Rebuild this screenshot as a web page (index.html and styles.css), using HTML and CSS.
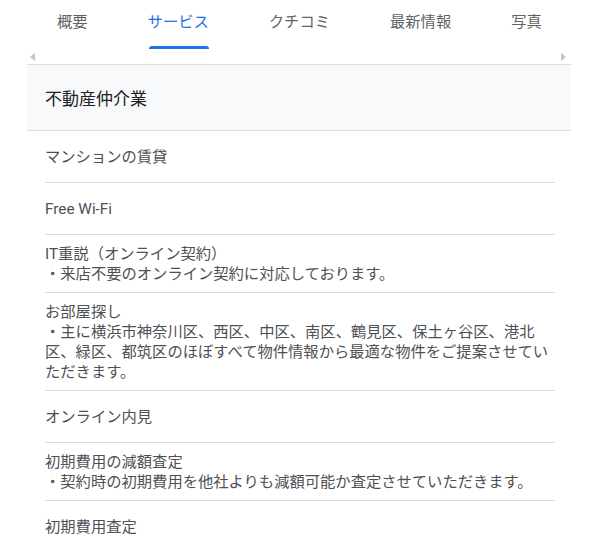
FILE: index.html
```html
<!DOCTYPE html>
<html lang="ja">
<head>
<meta charset="utf-8">
<title>サービス</title>
<link rel="stylesheet" href="styles.css">
</head>
<body>
<div class="panel">
  <nav class="tabs">
    <div class="tab">概要</div>
    <div class="tab active">サービス</div>
    <div class="tab">クチコミ</div>
    <div class="tab">最新情報</div>
    <div class="tab">写真</div>
  </nav>
  <div class="scroller">
    <span class="arrow left"></span>
    <span class="arrow right"></span>
  </div>
  <div class="category">不動産仲介業</div>
  <ul class="items">
    <li class="item">マンションの賃貸</li>
    <li class="item">Free Wi-Fi</li>
    <li class="item"><div>IT重説（オンライン契約）</div><div>・来店不要のオンライン契約に対応しております。</div></li>
    <li class="item"><div>お部屋探し</div><div>・主に横浜市神奈川区、西区、中区、南区、鶴見区、保土ヶ谷区、港北区、緑区、都筑区のほぼすべて物件情報から最適な物件をご提案させていただきます。</div></li>
    <li class="item">オンライン内見</li>
    <li class="item"><div>初期費用の減額査定</div><div>・契約時の初期費用を他社よりも減額可能か査定させていただきます。</div></li>
    <li class="item">初期費用査定</li>
  </ul>
</div>
</body>
</html>
```
FILE: styles.css
```css
html, body {
  margin: 0;
  padding: 0;
  background: #ffffff;
}
body {
  font-family: Roboto, "Noto Sans CJK JP", "Noto Sans", sans-serif;
  overflow: hidden;
}
.panel {
  margin-left: 27px;
  width: 544px;
}
.tabs {
  display: flex;
}
.tab {
  position: relative;
  padding: 12px 30px 17px 30px;
  font-size: 15.3px;
  line-height: 20px;
  color: #5f6368;
  white-space: nowrap;
}
.tab.active {
  color: #1a73e8;
}
.tab.active::after {
  content: "";
  position: absolute;
  left: 31px;
  right: 30px;
  bottom: 0;
  height: 3px;
  background: #1a73e8;
  border-radius: 3px 3px 0 0;
}
.scroller {
  display: flex;
  justify-content: space-between;
  align-items: center;
  height: 15px;
  padding: 0 5px 0 3px;
  border-bottom: 1px solid #dadce0;
}
.arrow {
  width: 0;
  height: 0;
  border-top: 4.5px solid transparent;
  border-bottom: 4.5px solid transparent;
}
.arrow.left {
  border-right: 5px solid #c4c4c4;
}
.arrow.right {
  border-left: 5px solid #c4c4c4;
}
.category {
  background: #f8f9fa;
  height: 65px;
  display: flex;
  align-items: center;
  padding-left: 18px;
  font-size: 17px;
  color: #202124;
  border-bottom: 1px solid #dadce0;
}
.items {
  list-style: none;
  margin: 0 16px 0 18px;
  padding: 0;
}
.item {
  display: flex;
  flex-direction: column;
  justify-content: center;
  min-height: 34px;
  padding: 9px 0 8px 0;
  font-size: 15.3px;
  line-height: 20px;
  color: #4d5156;
  border-bottom: 1px solid #dadce0;
}
```
